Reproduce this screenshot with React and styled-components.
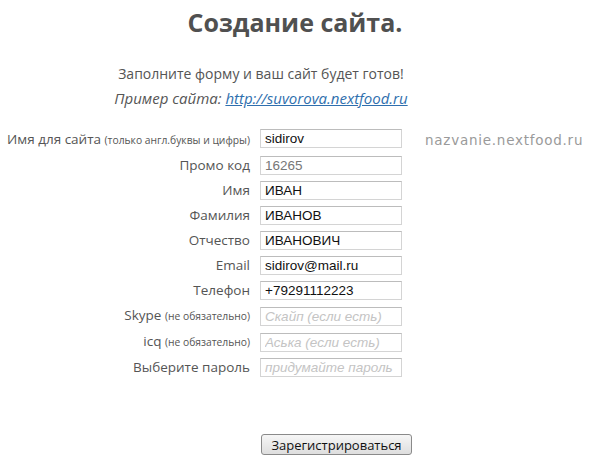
import React from "react";
import styled, { createGlobalStyle } from "styled-components";

const GlobalStyle = createGlobalStyle`
  body {
    margin: 0;
    background: #fff;
    font-family: "Open Sans", "Liberation Sans", sans-serif;
    color: #555;
  }
`;

const Page = styled.div`
  width: 590px;
  height: 466px;
  overflow: hidden;
`;

const Title = styled.h1`
  margin: 0;
  padding-top: 4px;
  text-align: center;
  font-family: "Open Sans", sans-serif;
  font-weight: 700;
  font-size: 25px;
  line-height: 36px;
  color: #505050;
`;

const Intro = styled.div`
  margin-top: 21px;
  padding-right: 68px;
  text-align: center;
  font-family: "Open Sans", sans-serif;
  font-size: 14px;
  line-height: 25px;
  color: #555;
`;

const Example = styled.div`
  font-style: italic;
  font-size: 15px;

  a {
    color: #2f6fae;
    text-decoration: underline;
  }
`;

const Form = styled.form`
  margin-top: 16px;
  display: grid;
  grid-template-columns: 250px 142px auto;
  column-gap: 10px;
  align-items: center;
`;

const Label = styled.label`
  text-align: right;
  font-family: "Open Sans", sans-serif;
  font-size: 13.5px;
  color: #555;
  line-height: 25px;
  white-space: nowrap;

  small {
    font-size: 10.3px;
  }
`;

const Field = styled.input`
  box-sizing: border-box;
  width: 142px;
  height: 19px;
  margin: ${(p) => (p.$first ? "0 0 3px" : "3px 0")};
  padding: 0 4px;
  border: 1px solid #d4d4d4;
  border-top-color: #bcbcbc;
  font-family: "Liberation Sans", Arial, sans-serif;
  font-size: 13.5px;
  color: ${(p) => (p.$muted ? "#777" : "#111")};
  outline: none;

  &::placeholder {
    color: #c4c4c4;
    font-style: italic;
  }
`;

const Hint = styled.div`
  padding-left: 13px;
  font-family: "DejaVu Sans", sans-serif;
  font-size: 13.5px;
  letter-spacing: 0.75px;
  color: #9a9a9a;
`;

const Actions = styled.div`
  display: flex;
  padding-left: 261px;
  margin-top: 54px;
`;

const Button = styled.button`
  width: 151px;
  height: 21px;
  padding: 0;
  border: 1px solid #8a8a8a;
  border-radius: 3px;
  background: linear-gradient(#f6f6f6, #dedede);
  font-family: "Open Sans", sans-serif;
  font-size: 13px;
  color: #111;
`;

const rows = [
  { label: "Имя для сайта", note: "(только англ.буквы и цифры)", value: "sidirov", first: true },
  { label: "Промо код", value: "16265", muted: true },
  { label: "Имя", value: "ИВАН" },
  { label: "Фамилия", value: "ИВАНОВ" },
  { label: "Отчество", value: "ИВАНОВИЧ" },
  { label: "Email", value: "sidirov@mail.ru" },
  { label: "Телефон", value: "+79291112223" },
  { label: "Skype", note: "(не обязательно)", placeholder: "Скайп (если есть)" },
  { label: "icq", note: "(не обязательно)", placeholder: "Аська (если есть)" },
  { label: "Выберите пароль", placeholder: "придумайте пароль" },
];

export default function App() {
  return (
    <Page>
      <GlobalStyle />
      <Title>Создание сайта.</Title>
      <Intro>
        <div>Заполните форму и ваш сайт будет готов!</div>
        <Example>
          Пример сайта: <a href="#">http://suvorova.nextfood.ru</a>
        </Example>
      </Intro>
      <Form onSubmit={(e) => e.preventDefault()}>
        {rows.map((r, i) => (
          <React.Fragment key={r.label}>
            <Label>
              {r.label} {r.note && <small>{r.note}</small>}
            </Label>
            <Field
              $first={r.first}
              $muted={r.muted}
              type="text"
              defaultValue={r.value}
              placeholder={r.placeholder}
            />
            {i === 0 ? <Hint>nazvanie.nextfood.ru</Hint> : <span />}
          </React.Fragment>
        ))}
      </Form>
      <Actions>
        <Button type="submit">Зарегистрироваться</Button>
      </Actions>
    </Page>
  );
}
